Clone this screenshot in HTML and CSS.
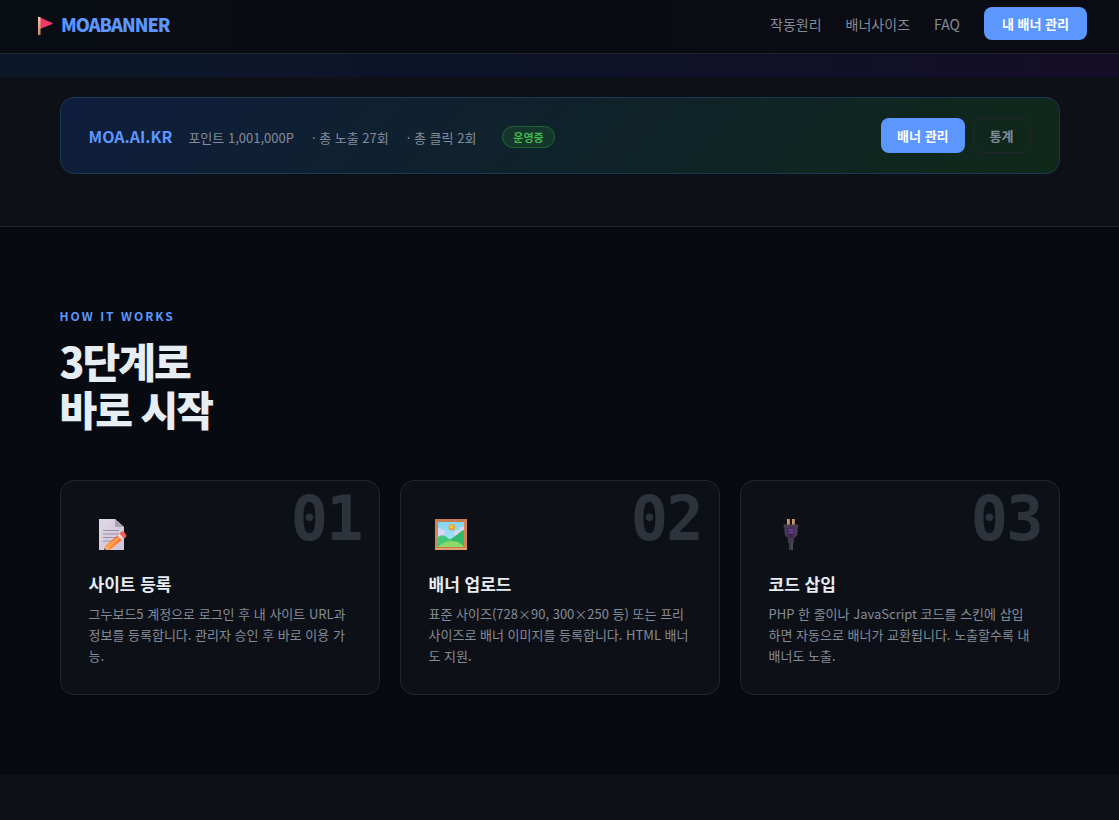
FILE: index.html
```html
<!DOCTYPE html>
<html lang="ko">
<head>
  <meta charset="UTF-8">
  <meta name="viewport" content="width=device-width, initial-scale=1">
  <title>MOABANNER</title>
  <link rel="stylesheet" href="styles.css">
</head>
<body>

  <header class="nav">
    <a class="logo" href="#">
      <svg width="24" height="24" viewBox="0 0 24 24" aria-hidden="true">
        <defs>
          <linearGradient id="pole" x1="0" y1="0" x2="0" y2="1">
            <stop offset="0" stop-color="#f3cdb0"/><stop offset="1" stop-color="#c98850"/>
          </linearGradient>
        </defs>
        <path d="M8 5.500L20.500 11Q21.300 11.500 20.500 12L8 17Z" fill="#f1386b"/>
        <rect x="6" y="5" width="2.500" height="18" fill="url(#pole)"/>
      </svg>
      <span>MOABANNER</span>
    </a>
    <nav class="nav-links">
      <a href="#how">작동원리</a>
      <a href="#sizes">배너사이즈</a>
      <a href="#faq">FAQ</a>
      <button type="button" class="btn btn-nav">내 배너 관리</button>
    </nav>
  </header>

  <div class="hero-edge"></div>

  <section class="account">
    <div class="container account-bar">
      <strong class="site">MOA.AI.KR</strong>
      <span class="stat">포인트 1,001,000P</span>
      <span class="stat">· 총 노출 27회</span>
      <span class="stat">· 총 클릭 2회</span>
      <span class="badge">운영중</span>
      <div class="actions">
        <button type="button" class="btn">배너 관리</button>
        <button type="button" class="btn btn-ghost">통계</button>
      </div>
    </div>
  </section>

  <section class="how" id="how">
    <div class="container">
      <p class="eyebrow">HOW IT WORKS</p>
      <h2>3단계로<br>바로 시작</h2>

      <div class="steps">
        <article class="step">
          <span class="num">01</span>
          <svg class="icon" viewBox="-1 -1 50 50" aria-hidden="true">
            <defs>
              <linearGradient id="paper" x1="0" y1="0" x2="1" y2="1">
                <stop offset="0" stop-color="#e0d8e6"/><stop offset="1" stop-color="#d0c1d8"/>
              </linearGradient>
              <linearGradient id="pencil" x1="0" y1="1" x2="1" y2="0">
                <stop offset="0" stop-color="#ffa344"/><stop offset="1" stop-color="#f4643d"/>
              </linearGradient>
            </defs>
            <path d="M9 9H25L34 17V40H9Z" fill="url(#paper)"/>
            <path d="M25 9L34 17H26Q25 17 25 16Z" fill="#ae9fb8"/>
            <path d="M13 20.500H29M13 24H29M13 27.500H27M13 31H22" stroke="#9990a3" stroke-width="1"/>
            <path d="M15 36L29 24L33 29L20 40H14Z" fill="url(#pencil)"/>
            <path d="M17.500 37.500L31 26" stroke="#ffad55" stroke-width="1.500"/>
            <path d="M15 35.500L19.500 40H14Z" fill="#edb78c"/>
            <path d="M14.500 38L16.500 40H14Z" fill="#65455c"/>
            <path d="M27.500 25.500L30 23.200L34.500 28L32 30.300Z" fill="#e7dce6"/>
            <path d="M29.500 23.500L31 22Q32.500 20.500 34 22L36 24.500Q37.200 26 36 27L34 28.500Z" fill="#f65b50"/>
          </svg>
          <h3>사이트 등록</h3>
          <p>그누보드5 계정으로 로그인 후 내 사이트 URL과 정보를 등록합니다. 관리자 승인 후 바로 이용 가능.</p>
        </article>

        <article class="step">
          <span class="num">02</span>
          <svg class="icon" viewBox="-1 -1 50 50" aria-hidden="true">
            <defs>
              <linearGradient id="sky" x1="0" y1="0" x2="0" y2="1">
                <stop offset="0" stop-color="#84d5f5"/><stop offset="1" stop-color="#b1e5fa"/>
              </linearGradient>
              <clipPath id="view"><rect x="8" y="12" width="26" height="25"/></clipPath>
            </defs>
            <rect x="5" y="9" width="32" height="31" fill="#d08656"/>
            <path d="M5 9L8 12H34L37 9ZM5 40L8 37H34L37 40Z" fill="#c77c50"/>
            <path d="M5 39H37" stroke="#e0a070" stroke-width="2"/>
            <rect x="8" y="12" width="26" height="25" fill="url(#sky)"/>
            <g clip-path="url(#view)">
              <path d="M8 19Q11 17 12 20Q16 20 15 24Q14 26 8 26Z" fill="#dcd4f4"/>
              <path d="M34 17Q30 16 29 20Q24 20 24 24Q25 27 34 26Z" fill="#ded6f5"/>
              <circle cx="21.800" cy="17.300" r="3.300" fill="#e5a62b"/>
              <circle cx="21.300" cy="16.800" r="1.700" fill="#f9c94b"/>
              <path d="M18 31L28 24Q32 20 34 20V37H18Z" fill="#35b968"/>
              <path d="M8 27Q13 23 18 28L29 37H8Z" fill="#42c877"/>
              <path d="M8 37Q13 31 22 31Q30 31 34 37Z" fill="#8ed968"/>
            </g>
          </svg>
          <h3>배너 업로드</h3>
          <p>표준 사이즈(728×90, 300×250 등) 또는 프리사이즈로 배너 이미지를 등록합니다. HTML 배너도 지원.</p>
        </article>

        <article class="step">
          <span class="num">03</span>
          <svg class="icon" viewBox="-1 -1 50 50" aria-hidden="true">
            <defs>
              <linearGradient id="plug" x1="0" y1="0" x2="1" y2="0">
                <stop offset="0" stop-color="#4b3c55"/><stop offset=".5" stop-color="#3b2351"/><stop offset="1" stop-color="#50465a"/>
              </linearGradient>
              <linearGradient id="prong" x1="0" y1="0" x2="1" y2="0">
                <stop offset="0" stop-color="#dcaa79"/><stop offset="1" stop-color="#a87750"/>
              </linearGradient>
            </defs>
            <rect x="17" y="9" width="3" height="6" fill="url(#prong)"/>
            <rect x="22" y="9" width="3" height="6" fill="url(#prong)"/>
            <rect x="18" y="27" width="6" height="6" fill="#40384b"/>
            <rect x="19" y="32" width="4" height="8" fill="#4b4454"/>
            <path d="M20 32V40" stroke="#302a38" stroke-width="1"/>
            <path d="M14.500 17H27.500V22Q27.500 28 22 28H20Q14.500 28 14.500 22Z" fill="url(#plug)"/>
            <rect x="13.500" y="14.500" width="15" height="3" rx="1" fill="#483d52"/>
            <path d="M19 19.800H23M19 22.500H23" stroke="#7941b3" stroke-width="1.500"/>
          </svg>
          <h3>코드 삽입</h3>
          <p>PHP 한 줄이나 JavaScript 코드를 스킨에 삽입하면 자동으로 배너가 교환됩니다. 노출할수록 내 배너도 노출.</p>
        </article>
      </div>
    </div>
  </section>

  <section class="sizes" id="sizes"></section>

</body>
</html>
```
FILE: styles.css
```css
* { box-sizing: border-box; margin: 0; padding: 0; }
body { background: #070a11; color: #e6edf3; font-family: "Noto Sans CJK KR", "Noto Sans", sans-serif; font-size: 14px; overflow-x: hidden; }
a { color: inherit; text-decoration: none; }

.nav { display: flex; align-items: center; justify-content: space-between; padding: 7px 32px 13px; background: linear-gradient(90deg, #080c13, #0b0b14); border-bottom: 1px solid #21262d; }
.logo { display: flex; align-items: center; gap: 5px; color: #5b97ff; font-size: 18px; font-weight: 900; line-height: 28px; letter-spacing: -1px; }
.nav-links { display: flex; align-items: center; gap: 24px; color: #848c97; }

.btn { padding: 8px 16px; border: 0; border-radius: 8px; background: #5b97ff; color: #fff; font: 700 13px/19px "Noto Sans CJK KR", sans-serif; cursor: pointer; }
.btn-nav { padding: 7px 18px; }
.btn-ghost { padding: 7px 16px; background: transparent; border: 1px solid #21262d; color: #848c97; }

.hero-edge { height: 23px; background: linear-gradient(90deg, #0c182a, #0d1329 45%, #150d28); }

.container { max-width: 1000px; margin: 0 auto; }

.account { padding: 20px 32px 52px; background: #0d1117; border-bottom: 1px solid #21262d; }
.account-bar { display: flex; flex-wrap: wrap; align-items: center; padding: 20px 28px; border: 1px solid #1d3853; border-radius: 14px; background: linear-gradient(135deg, #0f1d3d, #0f2819); }
.site { margin-right: 16px; color: #5b97ff; font-size: 16px; font-weight: 700; }
.stat { margin: 3px 18px 0 0; color: #848c97; font-size: 13px; }
.badge { margin: 3px 0 0 8px; padding: 0 10px; border: 1px solid #236333; border-radius: 20px; background: #15362a; color: #3fb950; font-size: 11px; font-weight: 700; line-height: 20px; }
.actions { display: flex; gap: 8px; margin-left: auto; }

.how { padding: 80px 32px; }
.eyebrow { margin-bottom: 12px; color: #5b97ff; font-size: 12px; font-weight: 700; line-height: 17px; letter-spacing: 2px; }
h2 { margin-bottom: 48px; font-size: 41px; font-weight: 900; line-height: 48px; letter-spacing: -2px; }

.steps { display: grid; grid-template-columns: repeat(3, 1fr); gap: 20px; }
.step { position: relative; padding: 28px; border: 1px solid #21262d; border-radius: 14px; background: #0d1117; }
.num { position: absolute; top: 6px; right: 17px; color: #2d333b; font-family: "DejaVu Sans Mono", monospace; font-size: 62px; font-weight: 700; line-height: 64px; letter-spacing: -2px; }
.icon { display: block; width: 50px; height: 50px; margin-bottom: 12px; }
h3 { margin-bottom: 6px; font-size: 17px; font-weight: 700; line-height: 26px; }
.step p { color: #848c97; font-size: 13px; line-height: 21px; }

.sizes { min-height: 45px; background: #0d1117; }
```
